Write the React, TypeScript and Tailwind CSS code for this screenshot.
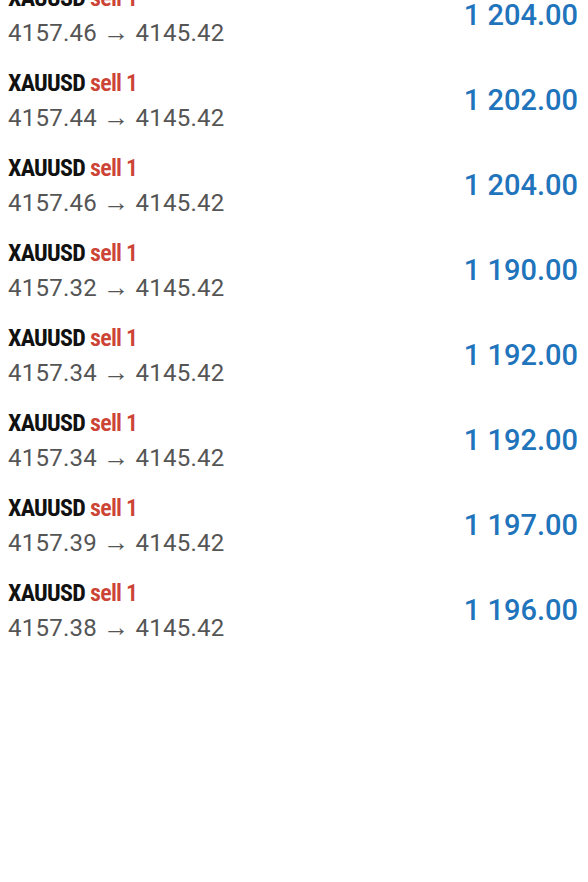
const rows = [
  { from: "4157.46", value: "1 204.00" },
  { from: "4157.44", value: "1 202.00" },
  { from: "4157.46", value: "1 204.00" },
  { from: "4157.32", value: "1 190.00" },
  { from: "4157.34", value: "1 192.00" },
  { from: "4157.34", value: "1 192.00" },
  { from: "4157.39", value: "1 197.00" },
  { from: "4157.38", value: "1 196.00" },
];

export default function App() {
  return (
    <div className="h-[882px] w-[588px] overflow-hidden bg-white" style={{ fontFamily: "Roboto, 'Liberation Sans', sans-serif" }}>
      <div className="-mt-[27px] flex flex-col pl-[8px] pr-[10px]">
        {rows.map((r, i) => (
          <div key={i} className="flex h-[85px] items-center justify-between">
            <div className="flex flex-col">
              <div className="text-[24px] leading-[34px] font-bold tracking-[-0.03em] [font-stretch:condensed] text-[#111]">
                XAUUSD <span className="font-semibold text-[#cc4436]">sell 1</span>
              </div>
              <div className="text-[24px] leading-[34px] tracking-[0.01em] text-[#555]">
                {r.from} <span className="text-[26px]">→</span> 4145.42
              </div>
            </div>
            <div className="text-[29px] font-medium text-[#1f74bb]">{r.value}</div>
          </div>
        ))}
      </div>
    </div>
  );
}
